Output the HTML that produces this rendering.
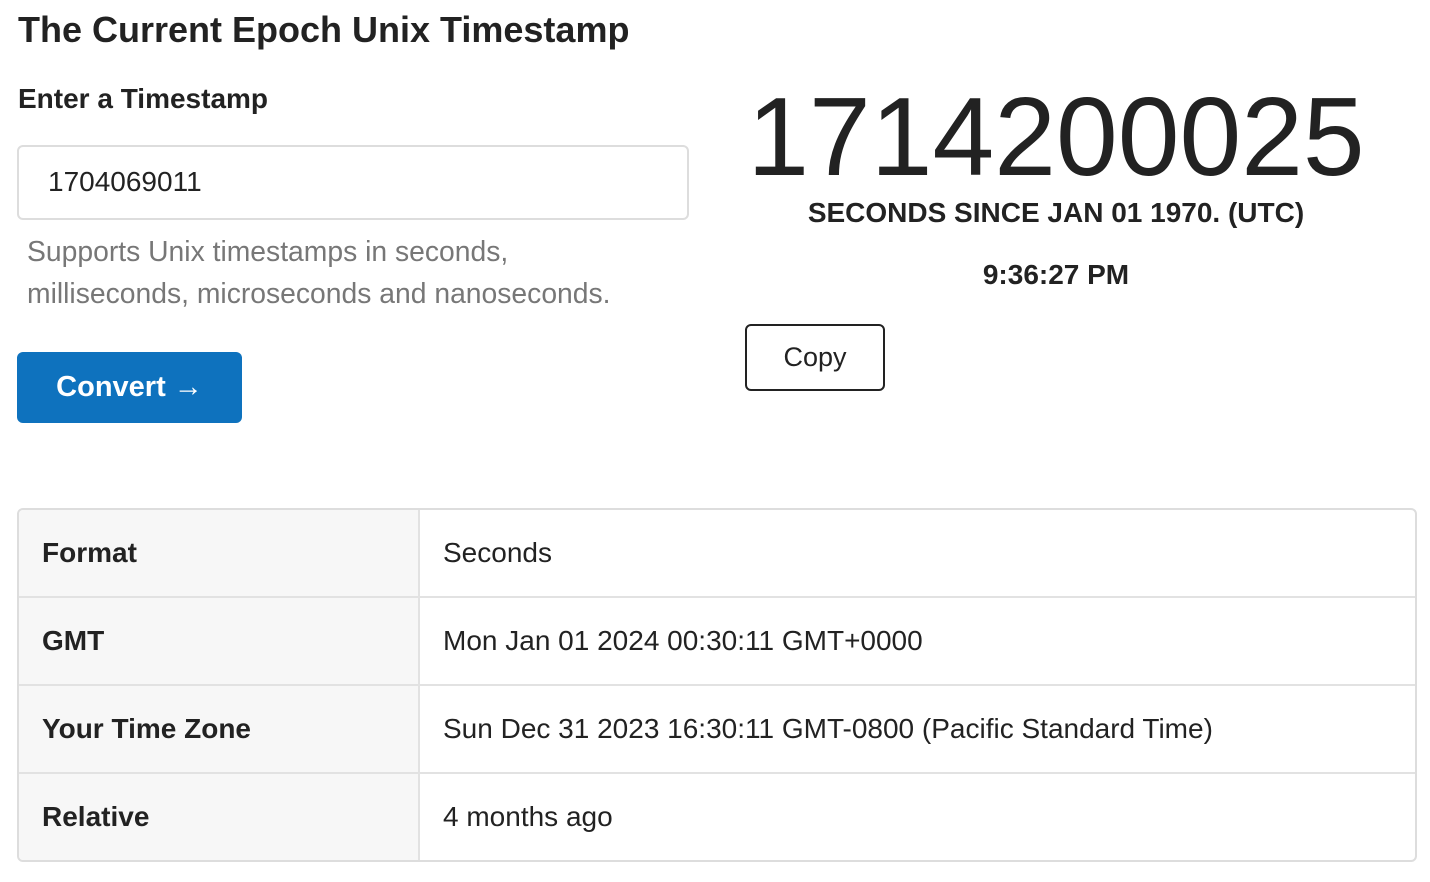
<!DOCTYPE html>
<html><head><style>
body{margin:0;width:1430px;height:882px;background:#fff;font-family:"Liberation Sans",Arial,sans-serif;color:#222;position:relative;overflow:hidden}
.a{position:absolute;white-space:nowrap}
table{position:absolute;left:17px;top:508px;width:1400px;border-collapse:separate;border-spacing:0;border:2px solid #ddd;border-radius:6px;overflow:hidden}
td{height:86px;font-size:28px;padding:0 0 0 23px;border-bottom:2px solid #e2e2e2}
tr:last-child td{border-bottom:none}
td.k{width:376px;background:#f7f7f7;font-weight:bold;border-right:2px solid #e2e2e2}
</style></head><body>
<div class="a" style="left:18px;top:9px;font-size:36px;font-weight:bold">The Current Epoch Unix Timestamp</div>
<div class="a" style="left:18px;top:83px;font-size:28px;font-weight:bold">Enter a Timestamp</div>
<div class="a" style="left:17px;top:145px;width:668px;height:71px;border:2px solid #ddd;border-radius:6px"></div>
<div class="a" style="left:48px;top:166px;font-size:28px">1704069011</div>
<div class="a" style="left:27px;top:230px;font-size:28.3px;color:#777;line-height:42px">Supports Unix timestamps in seconds,<br>milliseconds, microseconds and nanoseconds.</div>
<div class="a" style="left:17px;top:352px;width:225px;height:71px;background:#0e72be;border-radius:6px;color:#fff;font-size:29px;font-weight:bold;text-align:center;line-height:71px">Convert →</div>
<div class="a" style="left:700px;width:712px;text-align:center;top:72px;font-size:111px;line-height:130px">1714200025</div>
<div class="a" style="left:700px;width:712px;text-align:center;top:197px;font-size:28px;font-weight:bold">SECONDS SINCE JAN 01 1970. (UTC)</div>
<div class="a" style="left:700px;width:712px;text-align:center;top:259px;font-size:28px;font-weight:bold">9:36:27 PM</div>
<div class="a" style="left:745px;top:324px;width:136px;height:63px;border:2px solid #222;border-radius:6px;font-size:27px;text-align:center;line-height:63px">Copy</div>
<table>
<tr><td class="k">Format</td><td>Seconds</td></tr>
<tr><td class="k">GMT</td><td>Mon Jan 01 2024 00:30:11 GMT+0000</td></tr>
<tr><td class="k">Your Time Zone</td><td>Sun Dec 31 2023 16:30:11 GMT-0800 (Pacific Standard Time)</td></tr>
<tr><td class="k">Relative</td><td>4 months ago</td></tr>
</table>
</body></html>
